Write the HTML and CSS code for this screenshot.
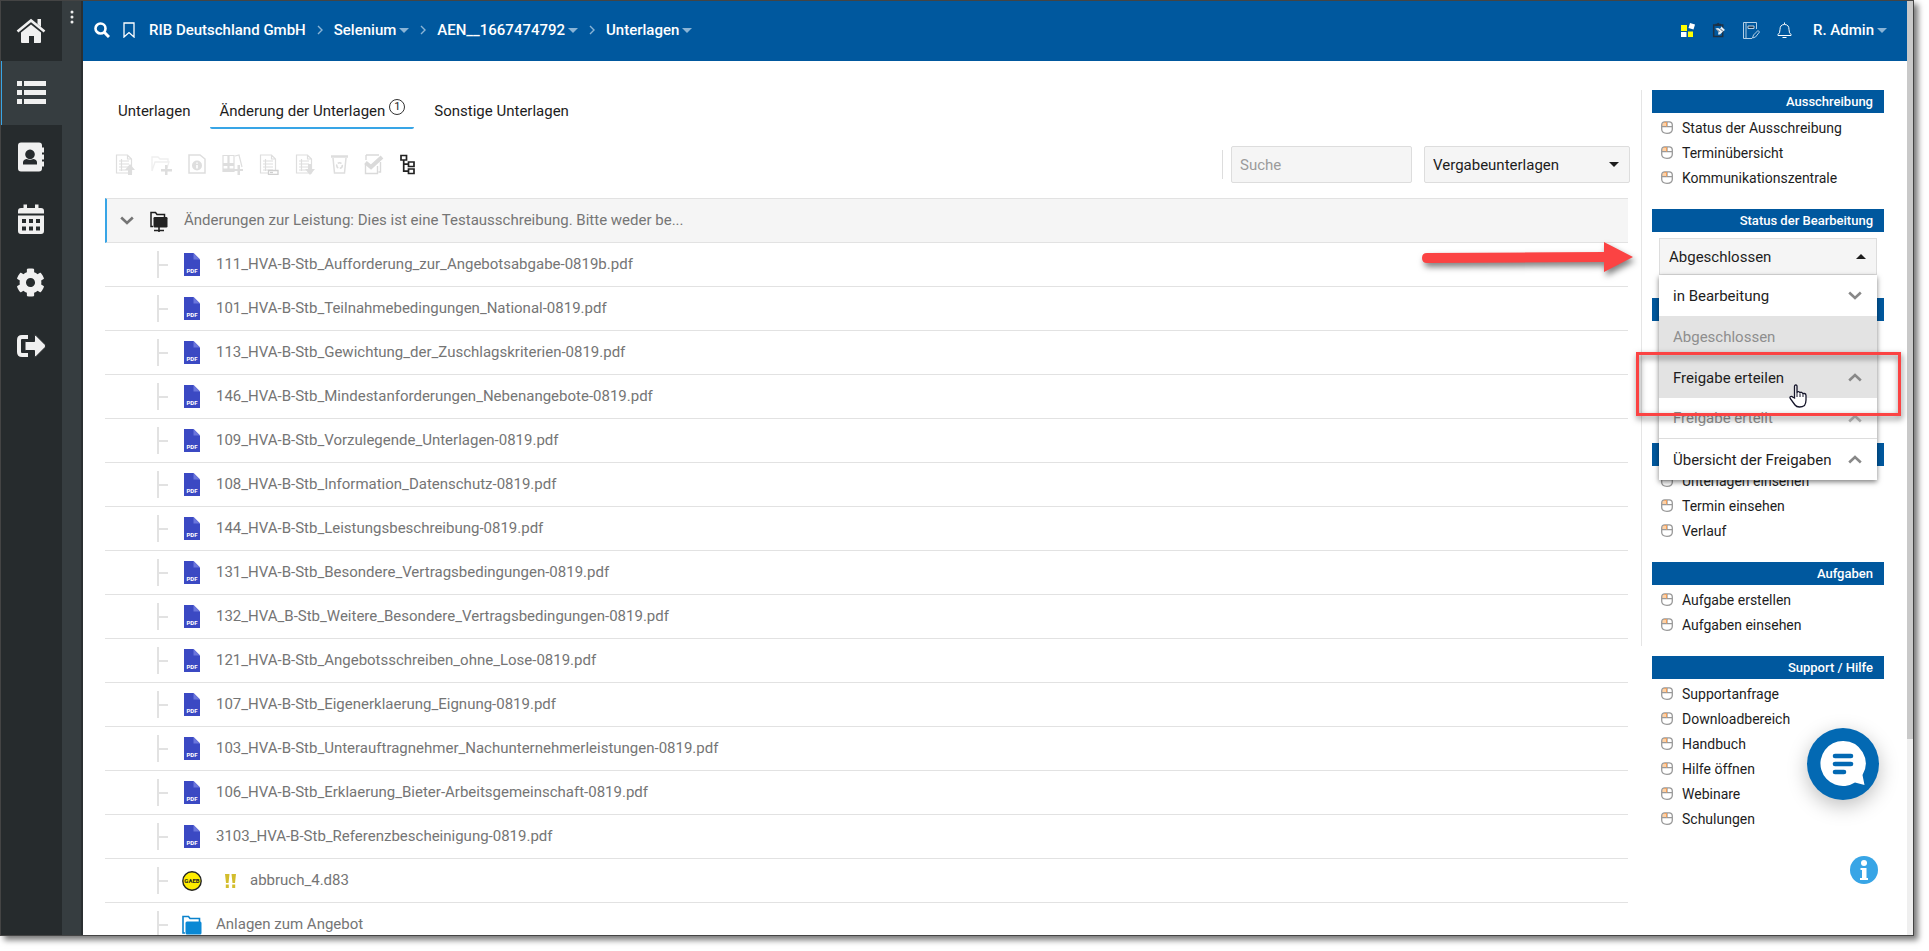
FILE: index.html
```html
<!DOCTYPE html>
<html lang="de">
<head>
<meta charset="utf-8">
<title>Änderung der Unterlagen</title>
<link rel="stylesheet" href="styles.css">
</head>
<body>
<svg class="sprite" width="0" height="0" aria-hidden="true">
  <symbol id="pdf" viewBox="0 0 16 23">
    <path d="M0 0h9.500l6.500 6.500V23H0z" fill="#3b49c3"/>
    <path d="M9.500 0v6.500H16z" fill="#6b76dc"/>
    <text x="8" y="19.500" text-anchor="middle" class="pdf-label">PDF</text>
  </symbol>
  <symbol id="caret" viewBox="0 0 10 5"><path d="M0 0h10L5 5z" fill="currentColor"/></symbol>
  <symbol id="crumb" viewBox="0 0 6 10"><path d="M1 1l4 4-4 4" fill="none" stroke="currentColor" stroke-width="1.400"/></symbol>
  <symbol id="down" viewBox="0 0 14 9"><path d="M1.200 1.500L7 7l5.800-5.500" fill="none" stroke="currentColor" stroke-width="2.600"/></symbol>
  <symbol id="up" viewBox="0 0 14 9"><path d="M1.200 7.500L7 2l5.800 5.500" fill="none" stroke="currentColor" stroke-width="2.600"/></symbol>
  <symbol id="mouse" viewBox="0 0 12 13">
    <path d="M5.500 1H3.500Q1 1 1 3.500V5.500H5.500z" fill="#ffd2a6"/>
    <path d="M3.800.8h4.400Q11.300.8 11.300 4v4.200Q11.300 12.300 6 12.300T.7 8.200V4Q.7.8 3.800.8zM.7 5.700h10.600M6 .8v4.900" fill="none" stroke="#999" stroke-width="1.300"/>
    <path d="M3.500 1.500h2v4" fill="none" stroke="#f5a05a" stroke-width="1"/>
  </symbol>
  <symbol id="sheet" viewBox="0 0 21 21">
    <path d="M1.500 1h11l4 4v14H1.500zM12.500 1v4h4M4 7h10M4 10h10M4 13h10M4 16h10M6.500 5v12" fill="none" stroke="currentColor" stroke-width="1.200"/>
  </symbol>
</svg>

<div class="window">
  <nav class="rail" aria-label="Hauptnavigation">
    <div class="rail-items">
      <a href="#" class="rail-item rail-home" aria-label="Start">
        <svg width="30" height="26" viewBox="0 0 30 26" fill="#f0f0f0"><path d="M1.500 13.500L15 2.500l13.500 11" fill="none" stroke="#f0f0f0" stroke-width="2.600"/><path d="M5 14.500L15 6.500l10 8V24q0 1-1 1h-6v-7h-5v7H6q-1 0-1-1zM21.500 1H25v8l-3.500-3z"/></svg>
      </a>
      <a href="#" class="rail-item active" aria-label="Liste">
        <svg width="30" height="26" viewBox="0 0 30 26" fill="#f0f0f0"><path d="M1 1h5v5H1zM8 1h22v5H8zM1 10h5v5H1zM8 10h22v5H8zM1 19h5v5H1zM8 19h22v5H8z"/></svg>
      </a>
      <a href="#" class="rail-item" aria-label="Kontakte">
        <svg width="28" height="30" viewBox="0 0 28 30" fill="#f0f0f0"><path fill-rule="evenodd" d="M4 .5h18q3 0 3 3v2h2v5h-2v2h2v5h-2v2h2v5h-2v2q0 3-3 3H4q-3 0-3-3v-23q0-3 3-3zM13 7.500a4.800 4.800 0 1 0 .01 0zM6 22.500h14v-2q0-3-3.500-3.500-3.500 1.500-7 0Q6 17.500 6 20.500z"/></svg>
      </a>
      <a href="#" class="rail-item" aria-label="Kalender">
        <svg width="28" height="31" viewBox="0 0 28 31" fill="#f0f0f0"><path fill-rule="evenodd" d="M6.500.5H10V4h8V.5h3.500V4H24q3 0 3 3v2.500H1V7q0-3 3-3h2.500zM1 11.500h26V27q0 3-3 3H4q-3 0-3-3zM5 15v4h4v-4zM12 15v4h4v-4zM19 15v4h4v-4zM5 22.500v4h4v-4zM12 22.500v4h4v-4zM19 22.500v4h4v-4z"/></svg>
      </a>
      <a href="#" class="rail-item" aria-label="Einstellungen">
        <svg width="29" height="29" viewBox="0 0 512 512" fill="#f0f0f0"><path d="M487.400 315.700l-42.600-24.600c4.300-23.200 4.300-47 0-70.200l42.600-24.600c4.900-2.800 7.100-8.600 5.500-14-11.100-35.600-30-67.800-54.700-94.600-3.800-4.100-10-5.100-14.800-2.300L380.800 110c-17.900-15.400-38.500-27.300-60.800-35.100V25.800c0-5.600-3.900-10.500-9.400-11.700-36.700-8.200-74.300-7.800-109.200 0-5.500 1.200-9.400 6.100-9.400 11.700V75c-22.200 7.900-42.800 19.800-60.800 35.100L88.700 85.500c-4.900-2.800-11-1.900-14.800 2.300-24.700 26.700-43.600 58.900-54.700 94.600-1.700 5.400.6 11.200 5.500 14L67.300 221c-4.300 23.200-4.300 47 0 70.200l-42.600 24.600c-4.900 2.800-7.100 8.600-5.500 14 11.100 35.600 30 67.800 54.700 94.600 3.800 4.100 10 5.100 14.800 2.300l42.600-24.600c17.900 15.400 38.500 27.300 60.800 35.100v49.200c0 5.600 3.900 10.500 9.400 11.700 36.700 8.200 74.300 7.800 109.200 0 5.500-1.200 9.400-6.100 9.400-11.700v-49.200c22.200-7.900 42.800-19.800 60.800-35.100l42.600 24.600c4.900 2.800 11 1.900 14.800-2.300 24.700-26.700 43.600-58.900 54.700-94.600 1.500-5.500-.7-11.300-5.600-14.100zM256 336c-44.100 0-80-35.900-80-80s35.900-80 80-80 80 35.900 80 80-35.900 80-80 80z"/></svg>
      </a>
      <a href="#" class="rail-item" aria-label="Abmelden">
        <svg width="30" height="24" viewBox="0 0 30 24" fill="#f0f0f0"><path d="M12 3H6Q3 3 3 6v12q0 3 3 3h6" fill="none" stroke="#f0f0f0" stroke-width="4"/><path d="M9 8.500q0-1 1-1h8.500V2q0-2 1.500-.5l9 9q1.300 1.500 0 3l-9 9q-1.500 1.500-1.500-.5v-5.500H10q-1 0-1-1z" stroke="#262b2d" stroke-width="1"/></svg>
      </a>
    </div>
    <button class="rail-strip" aria-label="Menü">
      <svg width="4" height="14" viewBox="0 0 4 14" fill="#eee"><circle cx="2" cy="2" r="1.500"/><circle cx="2" cy="7" r="1.500"/><circle cx="2" cy="12" r="1.500"/></svg>
    </button>
  </nav>

  <div class="page">
    <header class="topbar">
      <button class="icon-btn search-btn" aria-label="Suchen"><svg width="16" height="16" viewBox="0 0 16 16" fill="none" stroke="#fff"><circle cx="6.500" cy="6.500" r="5" stroke-width="2.600"/><path d="M10 10l5 5" stroke-width="3"/></svg></button>
      <button class="icon-btn mark-btn" aria-label="Lesezeichen"><svg width="12" height="16" viewBox="0 0 12 16"><path d="M1 1h10v14l-5-4.500L1 15z" fill="none" stroke="#fff" stroke-width="1.300"/></svg></button>
      <nav class="crumbs" aria-label="Pfad">
        <a href="#">RIB Deutschland GmbH</a>
        <svg class="sep" width="6" height="10"><use href="#crumb"/></svg>
        <a href="#">Selenium<svg width="10" height="5"><use href="#caret"/></svg></a>
        <svg class="sep" width="6" height="10"><use href="#crumb"/></svg>
        <a href="#">AEN__1667474792<svg width="10" height="5"><use href="#caret"/></svg></a>
        <svg class="sep" width="6" height="10"><use href="#crumb"/></svg>
        <a href="#">Unterlagen<svg width="10" height="5"><use href="#caret"/></svg></a>
      </nav>
      <div class="tools">
        <button class="icon-btn" aria-label="Apps"><svg width="14" height="14" viewBox="0 0 14 14"><path d="M0 2h6v6H0zM7 8.500h5V14H7z" fill="#ff0"/><path d="M0 9h5.500v5H0z" fill="#fff"/><path d="M9 0l5 1.500L12.500 6.500 7.500 5z" fill="#fff"/></svg></button>
        <button class="icon-btn" aria-label="Aufgaben"><svg width="14" height="16" viewBox="0 0 14 16"><path d="M1.700 3h9v11.500h-9z" fill="none" stroke="#1d3145" stroke-width="1.500"/><path d="M3.500 4V1.800h1.500Q6.200-.5 7.400 1.800h1.500V4z" fill="#1d3145"/><path d="M3.500 6.500l2.500-.5 2 1 1.500-2.500L13 8l-1.500 1L8 12.500H6L6.500 10z" fill="#e8f1f8"/><path d="M5 7.500l2.500 2.500M8.500 7l2.500 2.500" stroke="#1d3145" stroke-width=".8"/></svg></button>
        <button class="icon-btn" aria-label="Notizen"><svg width="17" height="17" viewBox="0 0 17 17" fill="none" stroke="#b5d0e6"><path d="M13.500 7V.5H.5v16H9M3 .5v16"/><path d="M5 4h6v2.500H5z" fill="#1d3145"/><path d="M9.500 16l1-3L15 8.500l1.500 1.500L12.500 15z"/></svg></button>
        <button class="icon-btn" aria-label="Benachrichtigungen"><svg width="15" height="17" viewBox="0 0 15 17" fill="none" stroke="#fff"><path d="M7.500.5v1.500M1 13.500v-1Q3 11.500 3 7.500 3 2.500 7.500 2.500T12 7.500q0 4 2 5v1zM5.500 15.500h4"/></svg></button>
        <button class="user">R. Admin<svg width="10" height="5"><use href="#caret"/></svg></button>
      </div>
    </header>

    <div class="body">
      <main class="main">
        <nav class="tabs" aria-label="Bereiche">
          <a href="#" class="tab">Unterlagen</a>
          <a href="#" class="tab current">Änderung der Unterlagen <span class="count">1</span></a>
          <a href="#" class="tab">Sonstige Unterlagen</a>
        </nav>

        <div class="toolbar">
          <div class="actions">
            <button class="icon-btn" disabled aria-label="Hochladen"><svg width="20" height="21" viewBox="0 0 20 21"><use href="#sheet" width="21" height="21"/><path d="M13 21v-5h-3l5-6 5 6h-3v5z" fill="currentColor"/></svg></button>
            <button class="icon-btn" disabled aria-label="Ordner anlegen"><svg width="21" height="21" viewBox="0 0 21 21"><path d="M1 17V3h6l2 2h8v3M1 17L4 8h14l-2 6" fill="none" stroke="#efefef" stroke-width="1.300"/><path d="M14 11h2.500v4H21v2.500h-4.500V21H14v-3.500h-4V15h4z" fill="currentColor"/></svg></button>
            <button class="icon-btn" disabled aria-label="Information"><svg width="18" height="21" viewBox="0 0 18 21"><path d="M1 1h11l5 4v14H1z" fill="none" stroke="currentColor" stroke-width="1.500"/><circle cx="9" cy="11.500" r="5" fill="currentColor"/><path d="M9 8.500v1.200M9 11v3.500" stroke="#fff" stroke-width="1.600"/></svg></button>
            <button class="icon-btn" disabled aria-label="Ordnerablage"><svg width="21" height="21" viewBox="0 0 21 21"><path d="M1 1.500h5v16H1zM7 1.500h5v16H7zM13 2l4-1 3 12" fill="none" stroke="currentColor" stroke-width="1.200"/><path d="M1 9h5v3H1zM7 9h5v3H7zM1 14.500h11v3H1zM15.500 11H18v4h3v2h-3v4h-2.500v-4H12v-2h3.500z" fill="currentColor"/></svg></button>
            <button class="icon-btn" disabled aria-label="Umbenennen"><svg width="20" height="21" viewBox="0 0 20 21"><use href="#sheet" width="21" height="21"/><path d="M9.500 16.500h9.500v4H9.500z" fill="#fff" stroke="#d0d0d0" stroke-width="1.300"/><path d="M11 18.500h3" stroke="#d0d0d0" stroke-width="1.300"/></svg></button>
            <button class="icon-btn" disabled aria-label="Herunterladen"><svg width="20" height="21" viewBox="0 0 20 21"><use href="#sheet" width="21" height="21"/><path d="M13 10v5h-3l5 6 5-6h-3v-5z" fill="currentColor"/></svg></button>
            <button class="icon-btn" disabled aria-label="Papierkorb"><svg width="17" height="21" viewBox="0 0 17 21" fill="none" stroke="currentColor"><path d="M0 2.500h17" stroke-width="2.500"/><path d="M2 4l1.500 15h10L15 4" stroke-width="1.500"/><circle cx="8.500" cy="11.500" r="2.800" stroke-width="1.600" stroke-dasharray="4 1.500"/></svg></button>
            <button class="icon-btn" disabled aria-label="Prüfen"><svg width="20" height="21" viewBox="0 0 20 21" fill="none" stroke="#dadada"><path d="M2 1h13M1.500 10v9.500h12V12M2 1v5M16.500 8v10h-2" stroke-width="1.400"/><path d="M1.500 8.500L7 13 18 3" stroke-width="4"/></svg></button>
            <button class="icon-btn" aria-label="Baumansicht"><svg width="15" height="21" viewBox="0 0 15 21" fill="none" stroke="#222" stroke-width="1.700"><path d="M1 1.500h5.500V6H1zM8.500 8h5.500v4.500H8.500zM8.500 15h5.500v4.500H8.500zM3.700 6v11.200h4.800M3.700 10.200h4.800"/></svg></button>
          </div>
          <div class="filters">
            <input class="field" type="text" placeholder="Suche" aria-label="Suche">
            <div class="select-wrap">
              <select class="field" aria-label="Art der Unterlagen"><option>Vergabeunterlagen</option></select>
              <svg width="10" height="5"><use href="#caret"/></svg>
            </div>
          </div>
        </div>

        <ul class="files">
          <li class="group">
            <svg class="chev" width="14" height="9"><use href="#down"/></svg>
            <svg class="gicon" width="18" height="21" viewBox="0 0 18 21"><path d="M3 15.500H1V1.500h4.500l1.500 2h7.500V6" fill="none" stroke="#1d1d1d" stroke-width="1.500"/><rect x="3.500" y="6" width="14" height="10.500" rx="1.200" fill="#222"/><path d="M4 19.500h10M9 16v5" stroke="#222" stroke-width="1.600"/></svg>
            <a href="#">Änderungen zur Leistung: Dies ist eine Testausschreibung. Bitte weder be...</a>
          </li>
          <li><i class="branch"></i><svg class="ficon" width="16" height="23"><use href="#pdf"/></svg><a href="#">111_HVA-B-Stb_Aufforderung_zur_Angebotsabgabe-0819b.pdf</a></li>
          <li><i class="branch"></i><svg class="ficon" width="16" height="23"><use href="#pdf"/></svg><a href="#">101_HVA-B-Stb_Teilnahmebedingungen_National-0819.pdf</a></li>
          <li><i class="branch"></i><svg class="ficon" width="16" height="23"><use href="#pdf"/></svg><a href="#">113_HVA-B-Stb_Gewichtung_der_Zuschlagskriterien-0819.pdf</a></li>
          <li><i class="branch"></i><svg class="ficon" width="16" height="23"><use href="#pdf"/></svg><a href="#">146_HVA-B-Stb_Mindestanforderungen_Nebenangebote-0819.pdf</a></li>
          <li><i class="branch"></i><svg class="ficon" width="16" height="23"><use href="#pdf"/></svg><a href="#">109_HVA-B-Stb_Vorzulegende_Unterlagen-0819.pdf</a></li>
          <li><i class="branch"></i><svg class="ficon" width="16" height="23"><use href="#pdf"/></svg><a href="#">108_HVA-B-Stb_Information_Datenschutz-0819.pdf</a></li>
          <li><i class="branch"></i><svg class="ficon" width="16" height="23"><use href="#pdf"/></svg><a href="#">144_HVA-B-Stb_Leistungsbeschreibung-0819.pdf</a></li>
          <li><i class="branch"></i><svg class="ficon" width="16" height="23"><use href="#pdf"/></svg><a href="#">131_HVA-B-Stb_Besondere_Vertragsbedingungen-0819.pdf</a></li>
          <li><i class="branch"></i><svg class="ficon" width="16" height="23"><use href="#pdf"/></svg><a href="#">132_HVA_B-Stb_Weitere_Besondere_Vertragsbedingungen-0819.pdf</a></li>
          <li><i class="branch"></i><svg class="ficon" width="16" height="23"><use href="#pdf"/></svg><a href="#">121_HVA-B-Stb_Angebotsschreiben_ohne_Lose-0819.pdf</a></li>
          <li><i class="branch"></i><svg class="ficon" width="16" height="23"><use href="#pdf"/></svg><a href="#">107_HVA-B-Stb_Eigenerklaerung_Eignung-0819.pdf</a></li>
          <li><i class="branch"></i><svg class="ficon" width="16" height="23"><use href="#pdf"/></svg><a href="#">103_HVA-B-Stb_Unterauftragnehmer_Nachunternehmerleistungen-0819.pdf</a></li>
          <li><i class="branch"></i><svg class="ficon" width="16" height="23"><use href="#pdf"/></svg><a href="#">106_HVA-B-Stb_Erklaerung_Bieter-Arbeitsgemeinschaft-0819.pdf</a></li>
          <li><i class="branch"></i><svg class="ficon" width="16" height="23"><use href="#pdf"/></svg><a href="#">3103_HVA-B-Stb_Referenzbescheinigung-0819.pdf</a></li>
          <li><i class="branch"></i><svg class="ficon" width="20" height="20" viewBox="0 0 20 20"><circle cx="10" cy="10" r="9.200" fill="#ffed00" stroke="#222" stroke-width="1.400"/><text x="10" y="12.200" text-anchor="middle" class="gaeb-label">GAEB</text></svg><svg class="warn" width="11" height="14" viewBox="0 0 11 14" fill="#d3bd2c"><path d="M0 0h4.500L3.500 9H1zM6.500 0H11l-1 9H7.500zM.8 10.500h3V14h-3zM7.200 10.500h3V14h-3z"/></svg><a href="#">abbruch_4.d83</a></li>
          <li><i class="branch"></i><svg class="ficon" width="20" height="20" viewBox="0 0 20 20"><path d="M3 18H1V1.500h5.500l1.500 2h9.500V7" fill="none" stroke="#0a82cc" stroke-width="1.600"/><rect x="3.500" y="6.500" width="16" height="13" rx="1.500" fill="#0a88d4"/></svg><a href="#">Anlagen zum Angebot</a></li>
        </ul>
      </main>

      <aside class="side">
        <div class="side-main">
          <section>
            <h2>Ausschreibung</h2>
            <ul class="links">
              <li><svg width="12" height="13"><use href="#mouse"/></svg><a href="#">Status der Ausschreibung</a></li>
              <li><svg width="12" height="13"><use href="#mouse"/></svg><a href="#">Terminübersicht</a></li>
              <li><svg width="12" height="13"><use href="#mouse"/></svg><a href="#">Kommunikationszentrale</a></li>
            </ul>
          </section>
          <section>
            <h2>Status der Bearbeitung</h2>
            <div class="status">
              <button class="status-btn" aria-expanded="true" aria-haspopup="menu">Abgeschlossen<svg class="flip" width="10" height="5"><use href="#caret"/></svg></button>
              <div class="menu" role="menu">
                <button role="menuitem">in Bearbeitung<svg width="14" height="9"><use href="#down"/></svg></button>
                <button role="menuitem" class="chosen" disabled>Abgeschlossen</button>
                <button role="menuitem" class="hover">Freigabe erteilen<svg width="14" height="9"><use href="#up"/></svg></button>
                <button role="menuitem" class="last-dim" disabled>Freigabe erteilt<svg width="14" height="9"><use href="#up"/></svg></button>
                <button role="menuitem">Übersicht der Freigaben<svg width="14" height="9"><use href="#up"/></svg></button>
                <div class="marker"></div>
                <svg class="hand" width="18" height="24" viewBox="0 0 18 24"><path d="M5.500 14V2.500q0-1.500 1.300-1.500T8 2.500V9q0-1.500 1.500-1.300T11 9.500q0-1.500 1.500-1.200T14 10.500q0-1.300 1.500-1T17 11.500V16q0 3-1.500 5.500-2 1.500-5 1.500T6 21L1.200 14.500q-.7-1.500.5-2t2.300.8z" fill="#fff" stroke="#15152a" stroke-width="1.300"/><path d="M8 9v4M11 10v3M14 10.500V13" stroke="#15152a"/></svg>
                <svg class="arrow" width="216" height="40" viewBox="0 0 216 40"><path d="M6 11L183 10V0l29 15-29 15V20L6 21q-5 0-5-5T6 11z" fill="#fb4343"/></svg>
              </div>
            </div>
          </section>
          <section>
            <div class="bar"></div>
            <div class="covered"></div>
          </section>
          <section>
            <div class="bar"></div>
            <ul class="links">
              <li><svg width="12" height="13"><use href="#mouse"/></svg><a href="#">Unterlagen einsehen</a></li>
              <li><svg width="12" height="13"><use href="#mouse"/></svg><a href="#">Termin einsehen</a></li>
              <li><svg width="12" height="13"><use href="#mouse"/></svg><a href="#">Verlauf</a></li>
            </ul>
          </section>
          <section>
            <h2>Aufgaben</h2>
            <ul class="links">
              <li><svg width="12" height="13"><use href="#mouse"/></svg><a href="#">Aufgabe erstellen</a></li>
              <li><svg width="12" height="13"><use href="#mouse"/></svg><a href="#">Aufgaben einsehen</a></li>
            </ul>
          </section>
        </div>
        <section class="support">
          <h2>Support / Hilfe</h2>
          <ul class="links">
            <li><svg width="12" height="13"><use href="#mouse"/></svg><a href="#">Supportanfrage</a></li>
            <li><svg width="12" height="13"><use href="#mouse"/></svg><a href="#">Downloadbereich</a></li>
            <li><svg width="12" height="13"><use href="#mouse"/></svg><a href="#">Handbuch</a></li>
            <li><svg width="12" height="13"><use href="#mouse"/></svg><a href="#">Hilfe öffnen</a></li>
            <li><svg width="12" height="13"><use href="#mouse"/></svg><a href="#">Webinare</a></li>
            <li><svg width="12" height="13"><use href="#mouse"/></svg><a href="#">Schulungen</a></li>
          </ul>
        </section>
      </aside>
    </div>
  </div>

  <div class="scroll"><div class="thumb"></div></div>

  <button class="chat" aria-label="Chat"><svg width="46" height="46" viewBox="0 0 46 46"><path d="M23 0a22.500 22.500 0 1 0 12 41.500l9.500 2.500-2-10A22.500 22.500 0 0 0 23 0z" fill="#fff"/><path d="M15 15h16M15 23h16M15 31h9" stroke="#0369b3" stroke-width="4.600" stroke-linecap="round"/></svg></button>
  <button class="info" aria-label="Information"><svg width="28" height="28" viewBox="0 0 28 28"><circle cx="14" cy="14" r="14" fill="#38a5e6"/><circle cx="14" cy="7" r="3" fill="#fff"/><path d="M10.500 12h6v10H18v2h-8v-2h2v-8h-1.500z" fill="#fff"/></svg></button>
</div>
</body>
</html>
```
FILE: styles.css
```css
* { box-sizing: border-box; }
body { margin: 0; height: 100vh; padding: 0 15px 15px 0; background: #fff; font-family: Roboto, "Liberation Sans", sans-serif; font-size: 15px; color: #1d1d1d; }
a { color: inherit; text-decoration: none; }
ul { list-style: none; margin: 0; padding: 0; }
button { font: inherit; color: inherit; border: 0; background: none; padding: 0; }
svg { flex: none; display: block; }
.sprite { display: none; }

.window { position: relative; height: 100%; display: flex; overflow: hidden; border: 1px solid #444; background: #fff; box-shadow: 4px 4px 6px #777; }

.rail { display: flex; flex: none; }
.rail-items { width: 61px; background: #262b2d; }
.rail-item { height: 63px; display: flex; align-items: center; justify-content: center; padding-right: 2px; }
.rail-home { height: 60px; }
.rail-item.active { height: 64px; background: #363d40; border-left: 1px solid #38a5e6; }
.rail-strip { width: 21px; background: #363d40; border-right: 2px solid #2a2f31; display: flex; justify-content: center; padding-top: 9px; }

.page { flex: 1; min-width: 0; display: flex; flex-direction: column; }
.topbar { height: 60px; flex: none; background: #00589e; color: #fff; display: flex; align-items: center; padding: 0 20px 2px 11px; font-weight: 500; }
.icon-btn { display: flex; align-items: center; justify-content: center; }
.search-btn { margin-right: 13px; }
.mark-btn { margin-right: 14px; }
.crumbs { display: flex; align-items: center; gap: 11px; }
.crumbs a, .user { display: flex; align-items: center; gap: 3px; }
.crumbs a svg, .user svg, .sep { color: #8ab4d6; }
.tools { margin-left: auto; display: flex; align-items: center; gap: 17px; }
.user { font-weight: 500; margin-left: 4px; }

.body { flex: 1; min-height: 0; display: flex; }
.main { flex: 1; min-width: 0; padding: 29px 11px 0 22px; }
.tabs { display: flex; gap: 2px; height: 39px; margin-left: -5px; }
.tab { padding: 12px 18px 0; }
.tab.current { display: flex; gap: 4px; padding: 12px 9px 0; border-bottom: 2px solid #38a5e6; border-radius: 2px; }
.count { width: 16px; height: 16px; margin-top: -3px; border: 1px solid #333; border-radius: 50%; font-size: 11px; line-height: 14px; text-align: center; }

.toolbar { display: flex; justify-content: space-between; align-items: center; height: 37px; margin-top: 17px; padding-left: 10px; }
.actions { display: flex; gap: 16px; }
.actions button { color: #dedede; }
.filters { display: flex; gap: 12px; position: relative; padding-left: 9px; }
.filters::before { content: ""; position: absolute; left: 0; top: 4px; bottom: 4px; border-left: 1px solid #ddd; }
.field { height: 37px; border: 1px solid #ddd; border-radius: 2px; background: #f5f5f5; font: inherit; color: #1d1d1d; padding: 0 8px; width: 181px; }
.field::placeholder { color: #9b9b9b; }
.select-wrap { position: relative; }
.select-wrap .field { width: 206px; appearance: none; }
.select-wrap svg { position: absolute; right: 11px; top: 16px; }

.files { margin: 15px 2px 0 0; color: #757575; }
.files li { height: 44px; display: flex; align-items: center; border-bottom: 1px solid #e2e2e2; padding-left: 52px; }
.files li.group { height: 45px; background: #f5f5f5; border-top: 1px solid #e2e2e2; border-left: 2px solid #38a5e6; padding-left: 13px; }
.files a { padding-bottom: 2px; }
.chev { color: #757575; }
.gicon { margin: 2px 16px 0 16px; }
.branch { width: 11px; height: 27px; border-left: 2px solid #e2e2e2; display: flex; align-items: center; }
.branch::before { content: ""; flex: 1; border-top: 2px solid #e2e2e2; }
.ficon { width: 20px; margin: 0 14px; }
.warn { margin: 0 14px 0 9px; }
.pdf-label { font: bold 6px Roboto, sans-serif; fill: #fff; }
.gaeb-label { font: bold 6px Roboto, sans-serif; fill: #222; }

.side { width: 266px; flex: none; padding: 29px 23px 0 0; }
.side-main { border-left: 1px solid #e5e5e5; padding: 0 0 9px 10px; display: flex; flex-direction: column; gap: 19px; }
.side h2, .bar { height: 23px; margin: 0 0 2px; padding: 0 11px; background: #00589e; color: #fff; font-size: 13px; font-weight: 500; line-height: 23px; text-align: right; }
.links li { height: 25px; display: flex; align-items: center; gap: 9px; padding-left: 9px; font-size: 14px; }
.covered { height: 101px; }
.support { margin: 10px 0 0 11px; }
.status { position: relative; margin: 0 7px; padding-top: 4px; height: 45px; }
.status-btn { width: 100%; height: 37px; border: 1px solid #ddd; background: #f5f5f5; display: flex; justify-content: space-between; align-items: center; padding: 0 10px 0 9px; }
.flip { transform: rotate(180deg); }
.menu { position: absolute; z-index: 2; left: 0; right: 0; top: 41px; background: #fff; box-shadow: 0 2px 5px rgba(0,0,0,.5); }
.menu button { width: 100%; height: 41px; display: flex; justify-content: space-between; align-items: center; padding: 0 15px 0 14px; }
.menu button svg { color: #888; }
.menu .chosen, .menu .hover { background: #e3e3e3; }
.menu .chosen, .menu .last-dim { color: #8e8e8e; }
.menu .last-dim { border-bottom: 1px solid #ddd; }
.menu .last-dim svg { color: #bbb; }
.marker { position: absolute; left: -23px; right: -24px; top: 77px; height: 64px; border: 3px solid #fb4343; filter: drop-shadow(1px 3px 3px rgba(0,0,0,.55)); }
.hand { position: absolute; left: 130px; top: 109px; }
.arrow { position: absolute; left: -238px; top: -33px; filter: drop-shadow(2px 4px 3px rgba(0,0,0,.5)); }

.scroll { width: 6px; flex: none; background: #efefef; }
.thumb { height: 79%; background: #c9c9c9; }
.chat { position: absolute; right: 34px; bottom: 135px; width: 72px; height: 72px; border-radius: 50%; background: #0369b3; display: flex; align-items: center; justify-content: center; box-shadow: 0 6px 20px rgba(0,0,0,.25); }
.info { position: absolute; right: 35px; bottom: 51px; }
```
